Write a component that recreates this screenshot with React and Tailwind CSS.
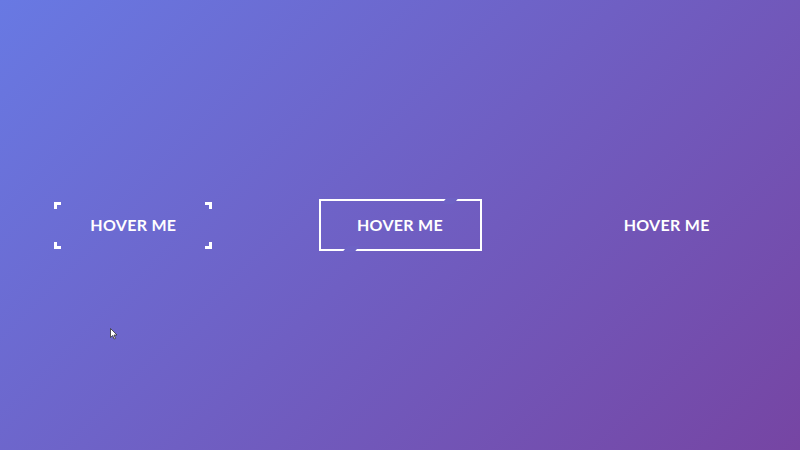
export default function App() {
  const label = "text-white font-bold text-[16px] tracking-[0.3px] leading-none";
  const font = { fontFamily: "Lato, 'Open Sans', sans-serif" };
  return (
    <div
      className="relative w-full h-[450px] flex items-center bg-[linear-gradient(135deg,#6879e3_0%,#7645a3_100%)] overflow-hidden"
      style={font}
    >
      <div className="flex-1 flex justify-center">
        <div className="relative w-[158px] h-[47px] flex items-center justify-center">
          <span className="absolute left-0 top-0 w-[7px] h-[7px] border-l-[3px] border-t-[3px] border-white" />
          <span className="absolute right-0 top-0 w-[7px] h-[7px] border-r-[3px] border-t-[3px] border-white" />
          <span className="absolute left-0 bottom-0 w-[7px] h-[7px] border-l-[3px] border-b-[3px] border-white" />
          <span className="absolute right-0 bottom-0 w-[7px] h-[7px] border-r-[3px] border-b-[3px] border-white" />
          <span className={label}>HOVER ME</span>
        </div>
      </div>
      <div className="flex-1 flex justify-center">
        <div className="relative w-[163px] h-[52px] border-2 border-white flex items-center justify-center">
          <span className="absolute top-[-3px] left-[123px] w-[12px] h-[6px] bg-[#6e62c4] -skew-x-[40deg]" />
          <span className="absolute bottom-[-3px] left-[24px] w-[12px] h-[6px] bg-[#6e63c6] -skew-x-[40deg]" />
          <span className={label}>HOVER ME</span>
        </div>
      </div>
      <div className="flex-1 flex justify-center">
        <div className="relative w-[158px] h-[47px] flex items-center justify-center">
          <span className={label}>HOVER ME</span>
        </div>
      </div>
      <svg
        className="absolute left-[110px] top-[328px]"
        width="8"
        height="12"
        viewBox="0 0 8 12"
      >
        <path d="M0.5 0.5 L0.5 9.5 L2.7 7.5 L4.2 11 L5.5 10.4 L4 7 L7 7 Z" fill="#fff" stroke="#333" strokeWidth="0.8" />
      </svg>
    </div>
  );
}
